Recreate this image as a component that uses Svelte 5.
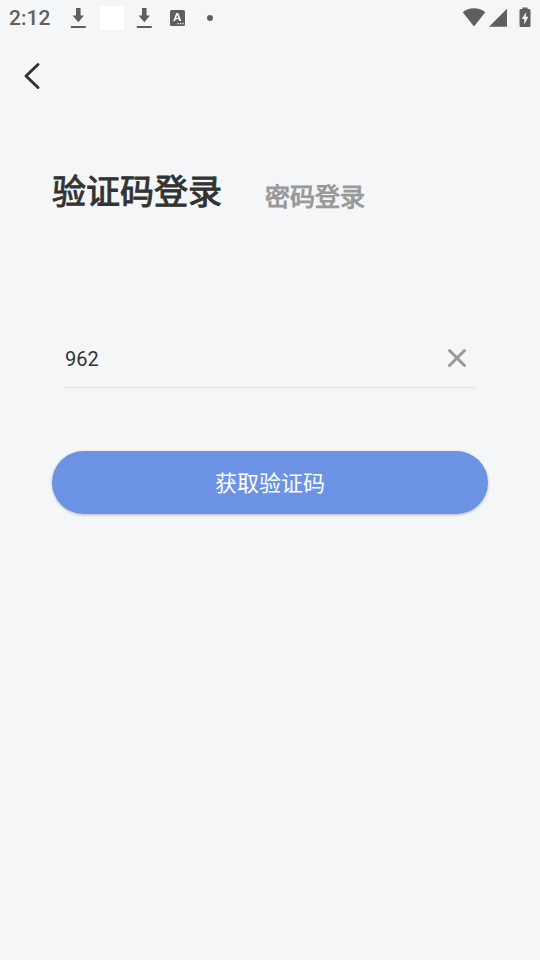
<script>
    let mode = 'code';
    let phone = '962';
    let phone_input;

    function clearPhone() {
        phone = '';
        phone_input.focus();
    }
</script>

<div class="screen">
    <div class="status-bar">
        <span class="clock">2:12</span>
        <svg width="16" height="22" viewBox="0 0 16 22">
            <path d="M6 1h4.600v7.500H14L8.300 15.200 2.600 8.500H6zM.8 19h15v1.900H.8z" />
        </svg>
        <span class="blank"></span>
        <svg width="16" height="22" viewBox="0 0 16 22">
            <path d="M6 1h4.600v7.500H14L8.300 15.200 2.600 8.500H6zM.8 19h15v1.900H.8z" />
        </svg>
        <svg class="keyboard" width="16" height="18" viewBox="0 0 16 18">
            <rect x="1" y="1" width="15" height="16" rx="1.500" />
            <path class="cut" fill-rule="evenodd" d="M7.200 4h2.100l3 8h-1.900l-.6-1.700H6.700L6.100 12H4.200zM8.250 6.100 7.200 8.900h2.100zM8.500 14h1.300v1.300H8.500zm2.400 0h1.300v1.300h-1.300zm2.400 0h1.300v1.300h-1.300z" />
        </svg>
        <span class="dot"></span>
        <div class="system">
            <svg width="24" height="20" viewBox="0 0 24 20">
                <path d="M.7 4.300C3.800 1.500 7.600.3 12 .3s8.200 1.200 11.300 4L12 18.500z" />
            </svg>
            <svg width="20" height="20" viewBox="0 0 20 20">
                <path d="M19 .8v18H1z" />
            </svg>
            <svg class="battery" width="12" height="20" viewBox="0 0 12 20">
                <path d="M3.500-.5h5V1H10q1.500 0 1.500 1.500v15Q11.500 19 10 19H2Q.5 19 .5 17.500v-15Q.5 1 2 1h1.500z" />
                <path class="cut" d="M7.300 4 2.700 11h2.600v5.500l4-7.700H6.700z" />
            </svg>
        </div>
    </div>

    <header>
        <button class="back" type="button" aria-label="返回">
            <svg width="18" height="28" viewBox="0 0 18 28">
                <path d="M15 2.500 3 14l12 11.500" />
            </svg>
        </button>
    </header>

    <main>
        <div class="tabs">
            <button type="button" class:active={mode === 'code'} on:click={() => mode = 'code'}>验证码登录</button>
            <button type="button" class:active={mode === 'password'} on:click={() => mode = 'password'}>密码登录</button>
        </div>

        <form on:submit|preventDefault>
            <div class="field">
                <input type="tel" aria-label="手机号" bind:value={phone} bind:this={phone_input} />
                {#if phone !== ''}
                    <button class="clear" type="button" aria-label="清除" on:click={clearPhone}>
                        <svg width="20" height="20" viewBox="0 0 20 20">
                            <path d="m2.500 2.500 15 15m0-15-15 15" />
                        </svg>
                    </button>
                {/if}
            </div>
            <button class="submit" type="submit">获取验证码</button>
        </form>
    </main>
</div>

<style>
    :global(body) {
        margin: 0;
        background: #f4f6f8;
    }

    .screen {
        min-height: 100vh;
        background: #f4f6f8;
        color: #333;
        font-family: Roboto, "Noto Sans CJK SC", sans-serif;
    }

    button {
        padding: 0;
        border: 0;
        background: none;
        font-family: inherit;
        cursor: pointer;
    }

    svg {
        display: block;
        flex: none;
        overflow: visible;
    }

    .status-bar {
        display: flex;
        align-items: center;
        height: 36px;
        padding: 0 9px;
        color: #5f5f5f;
    }

    .status-bar svg {
        fill: #5f5f5f;
    }

    .status-bar .cut {
        fill: #f4f6f8;
    }

    .clock {
        width: 61px;
        font-size: 21px;
        font-weight: 500;
    }

    .blank {
        width: 24px;
        height: 24px;
        margin: 0 12px 0 14px;
        background: #fff;
    }

    .keyboard {
        margin-left: 17px;
    }

    .dot {
        width: 6px;
        height: 6px;
        margin-left: 22px;
        border-radius: 50%;
        background: #5f5f5f;
    }

    .system {
        display: flex;
        align-items: center;
        gap: 2px;
        margin-left: auto;
    }

    .battery {
        margin-left: 9px;
    }

    header {
        display: flex;
        align-items: center;
        height: 80px;
        padding: 0 12px;
    }

    .back {
        display: flex;
        align-items: center;
        justify-content: center;
        width: 40px;
        height: 40px;
    }

    .back path {
        fill: none;
        stroke: #333;
        stroke-width: 3;
        stroke-linecap: round;
        stroke-linejoin: round;
    }

    main {
        padding: 51px 52px;
    }

    .tabs {
        display: flex;
        align-items: flex-end;
        gap: 43px;
    }

    .tabs button {
        color: #999;
        font-size: 25px;
        line-height: 38px;
        white-space: nowrap;
        -webkit-text-stroke: 1px currentColor;
    }

    .tabs .active {
        color: #333;
        font-size: 34px;
        line-height: 50px;
    }

    .field {
        display: flex;
        align-items: center;
        height: 58px;
        margin: 112px 13px 0;
        border-bottom: 1px solid #e0e2e5;
    }

    .field input {
        flex: 1;
        min-width: 0;
        padding: 2px 0 0;
        border: 0;
        outline: none;
        background: none;
        color: #333;
        font: 20px Roboto, sans-serif;
    }

    .clear {
        padding: 8px;
    }

    .clear path {
        fill: none;
        stroke: #999;
        stroke-width: 3;
        stroke-linecap: round;
    }

    .submit {
        display: block;
        width: 100%;
        height: 63px;
        margin-top: 63px;
        padding-bottom: 3px;
        border-radius: 32px;
        background: #6c92e4;
        box-shadow: 0 1px 3px rgba(0, 0, 0, 0.25);
        color: #fff;
        font-size: 22px;
    }
</style>
